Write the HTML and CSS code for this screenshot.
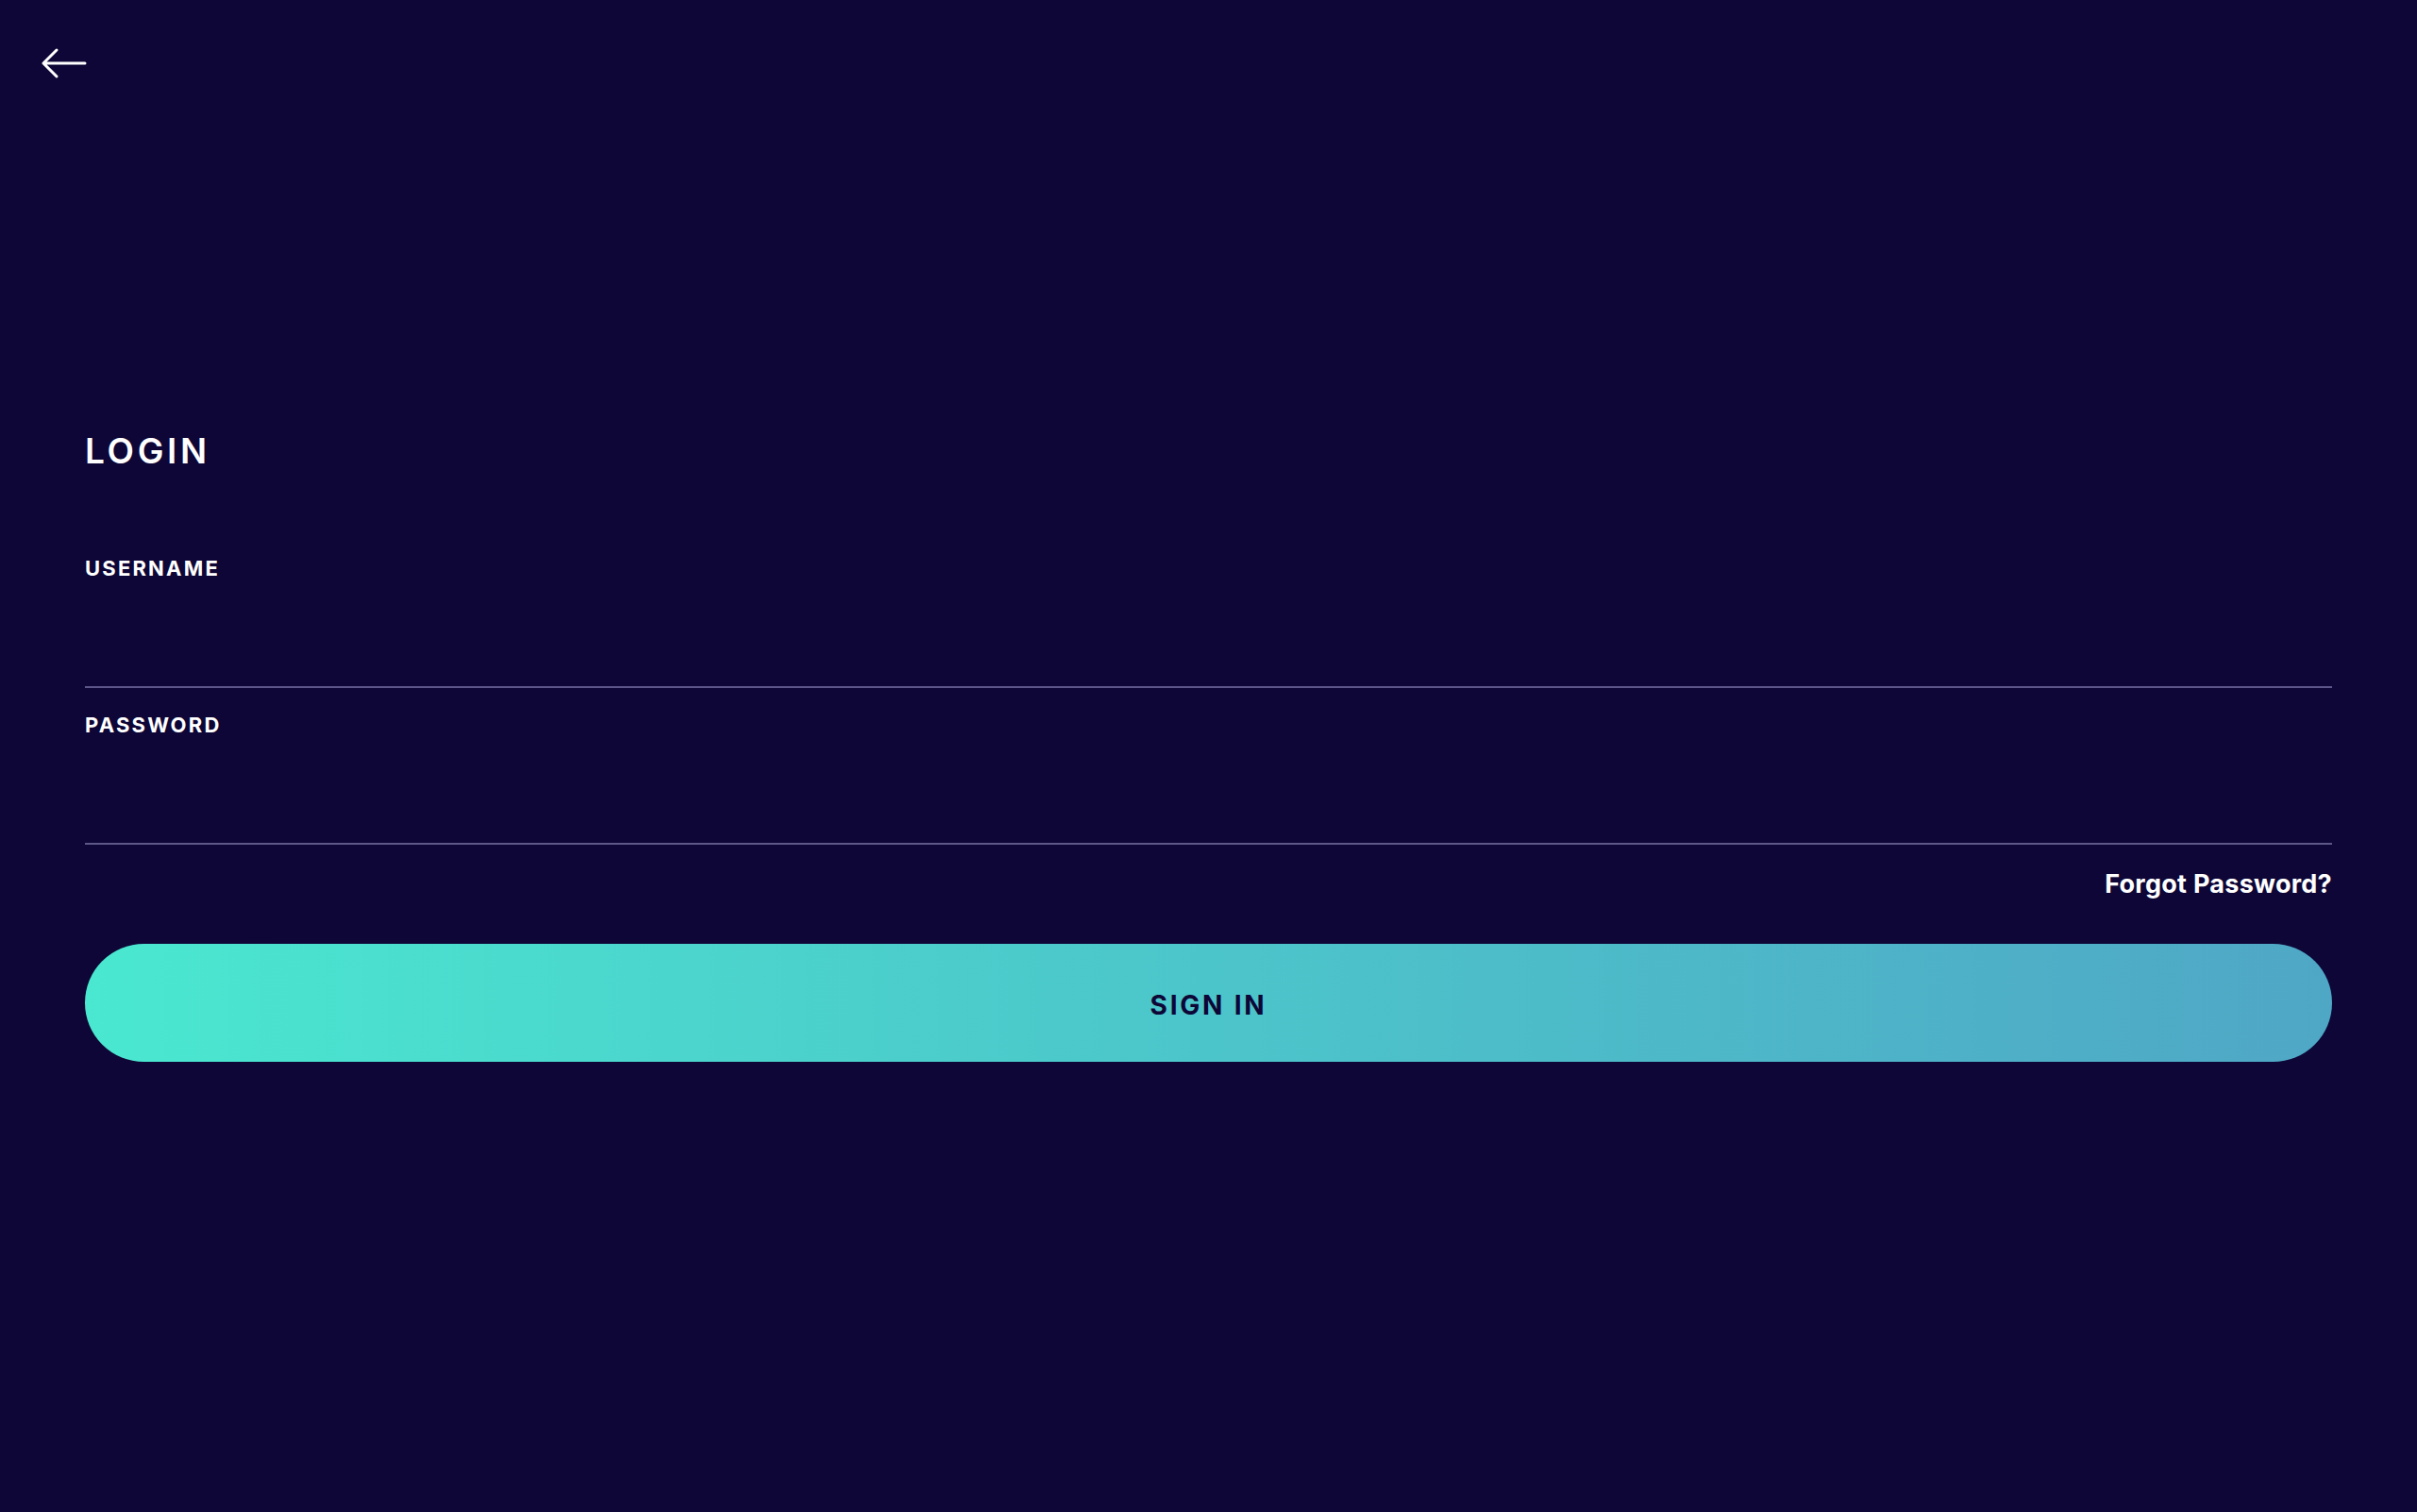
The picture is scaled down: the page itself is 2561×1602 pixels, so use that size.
FILE: index.html
```html
<!DOCTYPE html>
<html lang="en">
<head>
<meta charset="utf-8">
<title>Login</title>
<link rel="stylesheet" href="styles.css">
</head>
<body>
<header class="topbar">
  <button class="back" type="button" aria-label="Back">
    <svg class="back-icon" viewBox="0 0 56 44" width="56" height="44" aria-hidden="true">
      <path d="M20 8 L6 22 L20 36 M6 22 H50" fill="none" stroke="#ffffff" stroke-width="3" stroke-linecap="round" stroke-linejoin="round"/>
    </svg>
  </button>
</header>
<main class="login">
  <h1 class="title">LOGIN</h1>
  <form class="form">
    <div class="field">
      <label class="label" for="username">USERNAME</label>
      <input class="input" id="username" type="text">
    </div>
    <div class="field">
      <label class="label" for="password">PASSWORD</label>
      <input class="input" id="password" type="password">
    </div>
    <div class="forgot-row">
      <a class="forgot" href="#">Forgot Password?</a>
    </div>
    <button class="signin" type="button">SIGN IN</button>
  </form>
</main>
</body>
</html>
```
FILE: styles.css
```css
* {
  box-sizing: border-box;
}

html, body {
  margin: 0;
  padding: 0;
  height: 100%;
}

body {
  background: #0d0636;
  color: #ffffff;
  font-family: "Inter", "Noto Sans", "DejaVu Sans", sans-serif;
}

.topbar {
  display: flex;
  padding: 45px 0 0 40px;
}

.back {
  display: block;
  padding: 0;
  margin: 0;
  border: 0;
  background: transparent;
  cursor: pointer;
  line-height: 0;
}

.back-icon {
  display: block;
}

.login {
  padding: 366px 90px 0 90px;
}

.title {
  margin: 0;
  font-size: 37px;
  line-height: 45px;
  font-weight: 600;
  letter-spacing: 0.1em;
}

.form {
  display: flex;
  flex-direction: column;
  margin-top: 87px;
}

.field {
  display: flex;
  flex-direction: column;
}

.field + .field {
  margin-top: 24px;
}

.label {
  font-size: 22px;
  line-height: 30px;
  font-weight: 700;
  letter-spacing: 0.1em;
}

.input {
  height: 112px;
  border: 0;
  border-bottom: 2px solid #5c5788;
  background: transparent;
  color: #ffffff;
  font-family: inherit;
  font-size: 26px;
  outline: none;
  padding: 0;
}

.forgot-row {
  display: flex;
  justify-content: flex-end;
  margin-top: 24px;
}

.forgot {
  color: #ffffff;
  text-decoration: none;
  font-size: 27px;
  line-height: 36px;
  font-weight: 700;
  letter-spacing: 0.01em;
}

.signin {
  margin-top: 45px;
  height: 125px;
  padding: 4px 0 0 0;
  border: 0;
  border-radius: 63px;
  background: linear-gradient(90deg, #4ae8d0 0%, #4cc5ca 50%, #4fa7c6 100%);
  color: #0d0636;
  font-family: inherit;
  font-size: 28px;
  font-weight: 700;
  letter-spacing: 0.1em;
  cursor: pointer;
}
```
